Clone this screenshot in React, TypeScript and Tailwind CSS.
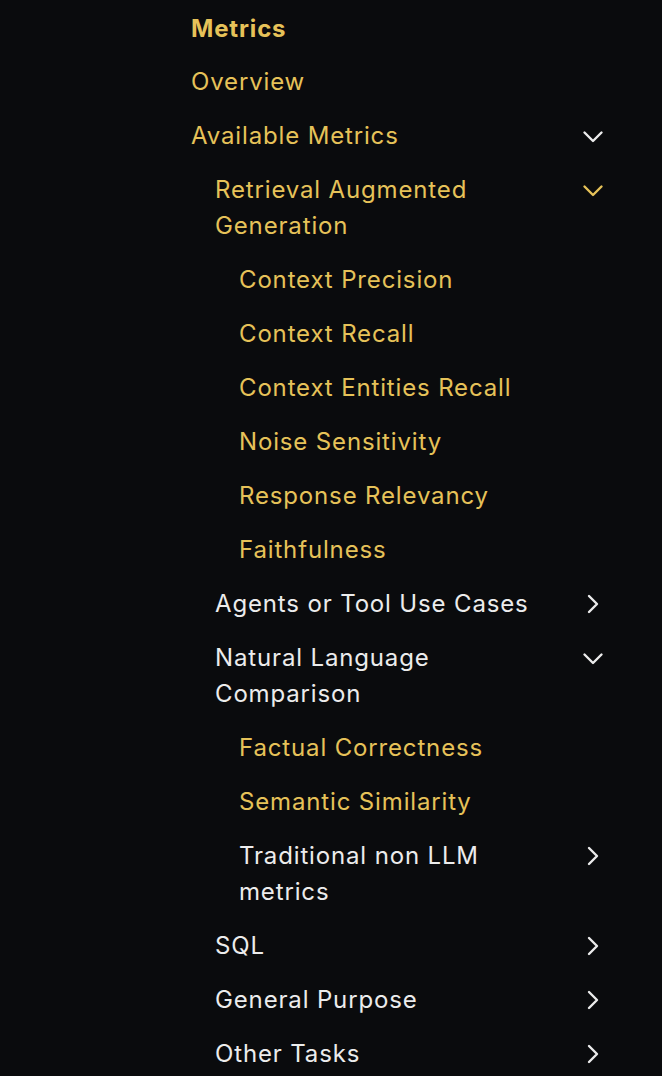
import type { ReactNode } from "react";

type Item = {
  label: string;
  depth: number;
  active?: boolean;
  chevron?: "down" | "right";
};

const items: Item[] = [
  { label: "Overview", depth: 0, active: true },
  { label: "Available Metrics", depth: 0, active: true, chevron: "down" },
  { label: "Retrieval Augmented Generation", depth: 1, active: true, chevron: "down" },
  { label: "Context Precision", depth: 2, active: true },
  { label: "Context Recall", depth: 2, active: true },
  { label: "Context Entities Recall", depth: 2, active: true },
  { label: "Noise Sensitivity", depth: 2, active: true },
  { label: "Response Relevancy", depth: 2, active: true },
  { label: "Faithfulness", depth: 2, active: true },
  { label: "Agents or Tool Use Cases", depth: 1, chevron: "right" },
  { label: "Natural Language Comparison", depth: 1, chevron: "down" },
  { label: "Factual Correctness", depth: 2, active: true },
  { label: "Semantic Similarity", depth: 2, active: true },
  { label: "Traditional non LLM metrics", depth: 2, chevron: "right" },
  { label: "SQL", depth: 1, chevron: "right" },
  { label: "General Purpose", depth: 1, chevron: "right" },
  { label: "Other Tasks", depth: 1, chevron: "right" },
];

const indent = ["pl-0", "pl-6", "pl-12"];

function Chevron({ dir, className }: { dir: "down" | "right"; className: string }) {
  return (
    <svg width="24" height="24" viewBox="0 0 24 24" fill="none" className={className}>
      <path
        d={dir === "down" ? "M3.5 8.5 12 17 20.5 8.5" : "M8 4 16 12 8 20"}
        stroke="currentColor"
        strokeWidth="2.4"
        strokeLinecap="round"
        strokeLinejoin="round"
      />
    </svg>
  );
}

function Row({ item }: { item: Item }): ReactNode {
  const chevronColor =
    item.label === "Retrieval Augmented Generation" ? "text-[#e6c259]" : "text-[#ececec]";
  return (
    <li className={`flex items-start py-[9px] ${indent[item.depth]}`}>
      <span className={`flex-1 pr-[40px] ${item.active ? "text-[#e6c259]" : "text-[#ececec]"}`}>
        {item.label}
      </span>
      {item.chevron && (
        <span className="flex h-9 w-6 shrink-0 items-center justify-center">
          <Chevron dir={item.chevron} className={chevronColor} />
        </span>
      )}
    </li>
  );
}

export default function App() {
  return (
    <div className="h-[1076px] overflow-hidden bg-[#0a0b0d] font-['Inter','Liberation_Sans',sans-serif] text-[24px] leading-9 tracking-[0.85px]">
      <nav className="ml-[191px] w-[414px] pt-[11px]">
        <p className="mb-[8px] font-bold text-[#e6c259]">Metrics</p>
        <ul>
          {items.map((item) => (
            <Row key={item.label} item={item} />
          ))}
        </ul>
      </nav>
    </div>
  );
}
